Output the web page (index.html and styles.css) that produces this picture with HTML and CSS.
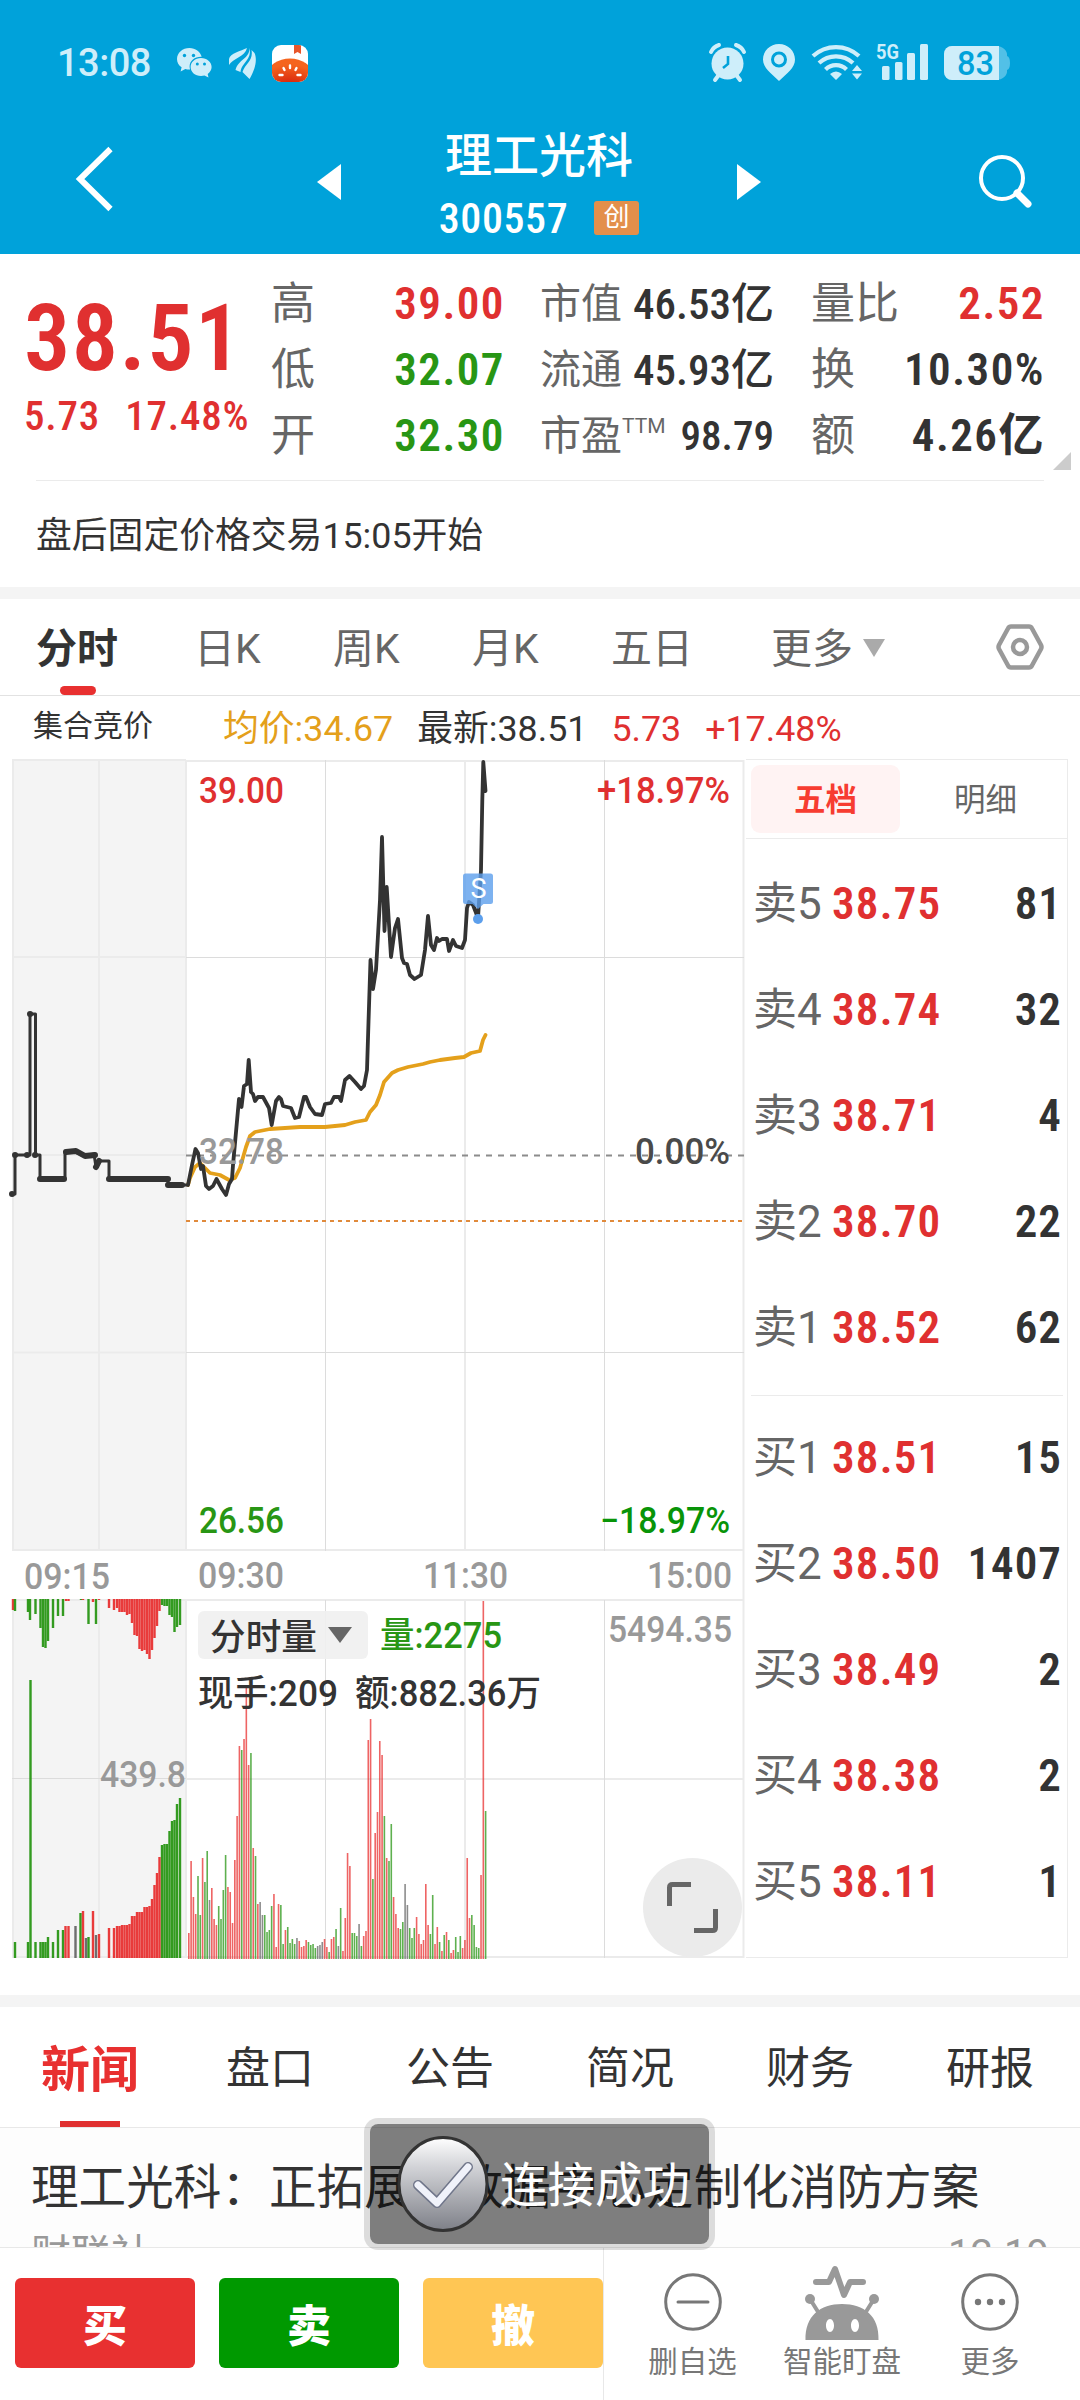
FILE: index.html
```html
<!DOCTYPE html>
<html lang="zh-CN">
<head>
    <meta charset="UTF-8">
    <meta name="viewport" content="width=device-width, initial-scale=1.0">
    <title>理工光科 300557</title>

    <link rel="stylesheet" href="styles.css">
</head>
<body>

    <header>
        <div class="status">
            <span class="time">13:08</span>
            <svg class="ico-wechat" width="36" height="30" viewBox="0 0 36 30" fill="#ceeefa">
                <path d="M12.500 0C5.600 0 0 4.800 0 11c0 3.400 1.700 6.300 4.600 8.300L3.600 23.500l4.700-2.600c1.400.4 2.700.6 4.200.6h.6a10 10 0 0 1-.5-3c0-5.700 5-9.800 11.300-9.800h.8C23.300 3.700 18.400 0 12.500 0z"/>
                <path d="M24 10c-5.900 0-10.400 4-10.400 9.100s4.500 9 10.400 9c1.200 0 2.400-.2 3.500-.5l4 2-.8-3.600c2.400-1.700 3.900-4.100 3.900-6.900C34.600 14 29.900 10 24 10z"/>
                <g fill="#00a2da"><circle cx="7.500" cy="7.500" r="1.700"/><circle cx="16.500" cy="7.500" r="1.700"/><circle cx="20.300" cy="16" r="1.500"/><circle cx="27.500" cy="16" r="1.500"/></g>
            </svg>
            <svg class="ico-wing" width="27" height="31" viewBox="0 0 27 31" fill="#ceeefa">
                <path d="M18 0C12 3 1 5 0 11v6C4 10 16 9 18 0z"/>
                <path d="M20.500 0c0 11-11 11-14 22l5 2C13 14 23 12 20.500 0z"/>
                <path d="M22.500 2c2 11-6 13-9 22l7 7c3-5 9-17 5-26z"/>
            </svg>
            <svg class="ico-tomato" width="36" height="37" viewBox="0 0 36 37">
                <defs>
                    <clipPath id="app"><rect width="36" height="37" rx="9"/></clipPath>
                    <radialGradient id="tomato" cx=".5" cy="1" r=".8"><stop offset="0" stop-color="#cf1208"/><stop offset="1" stop-color="#f5641e"/></radialGradient>
                </defs>
                <g clip-path="url(#app)">
                    <rect width="36" height="37" fill="#fff"/>
                    <path d="M22 0h7v9l-3.500-2L22 9z" fill="#e8562a"/>
                    <ellipse cx="18" cy="29" rx="22" ry="15.500" fill="url(#tomato)"/>
                </g>
                <g stroke="#fff" stroke-width="2.400" stroke-linecap="round"><path d="M18 20.500v2.500M11.500 23l1 2M24.500 23l-1 2M7.500 30h3M25.500 30h3"/></g>
            </svg>
            <svg class="status-right" width="304" height="42" viewBox="708 43 304 42" fill="#ceeefa">
                <circle cx="727.500" cy="64.500" r="16"/>
                <path d="M711 53a13 13 0 0 1 8-7M744 53a13 13 0 0 0-8-7M718 77l-3 4M737 77l3 4" fill="none" stroke="#ceeefa" stroke-width="4" stroke-linecap="round"/>
                <path d="M728 57v8l-5 4" fill="none" stroke="#00a2da" stroke-width="2.600"/>
                <path d="M779 45c-9 0-16 7-16 15.500C763 69 771 74 779 82c8-8 16-13 16-21.500C795 52 788 45 779 45z"/>
                <circle cx="779" cy="60.500" r="6.500" stroke="#00a2da" stroke-width="3"/>
                <g fill="none" stroke="#ceeefa" stroke-width="4.200"><path d="M813 57a34 34 0 0 1 46 0M819 64a25 25 0 0 1 34 0M825.500 70.500a15 15 0 0 1 21 0"/></g>
                <path d="M830 75q6-5 12 0l-6 6zM852 72l5-6 5 6zM852 74.500l5 6 5-6z"/>
                <rect x="882" y="67" width="7.500" height="14" rx="1.500"/><rect x="895" y="63" width="7.500" height="18" rx="1.500"/><rect x="907" y="54" width="8" height="27" rx="1.500"/><rect x="920" y="45" width="8" height="36" rx="1.500"/>
                <text x="876" y="60" class="net" textLength="23" lengthAdjust="spacingAndGlyphs">5G</text>
                <path d="M952 47h44a11 9 0 0 1 11 10q3 1 3 7t-3 7a11 9 0 0 1-11 10h-44a8 8 0 0 1-8-8V55a8 8 0 0 1 8-8z" opacity=".4"/>
                <path d="M952 47h47v34h-47a8 8 0 0 1-8-8V55a8 8 0 0 1 8-8z"/>
                <text x="957" y="75.500" class="battery" textLength="37" lengthAdjust="spacingAndGlyphs">83</text>
            </svg>
        </div>
        <div class="nav">
            <svg width="50" height="70" viewBox="70 144 50 70" fill="none" stroke="#fff" stroke-width="6"><path d="M110.500 149L80 179l30.500 30"/></svg>
            <svg class="prev" width="24" height="36" viewBox="0 0 24 36" fill="#fff"><path d="M24 0v36L0 18z"/></svg>
            <div class="stock">
                <h1>理工光科</h1>
                <div class="code"><span class="num">300557</span><span class="badge">创</span></div>
            </div>
            <svg class="next" width="24" height="36" viewBox="0 0 24 36" fill="#fff"><path d="M0 0v36l24-18z"/></svg>
            <svg class="search" width="54" height="54" viewBox="978 154 54 54" fill="none" stroke="#fff"><circle cx="1002" cy="178" r="21" stroke-width="4"/><path d="M1017 193l11 11" stroke-width="7" stroke-linecap="round"/></svg>
        </div>
    </header>

    <section class="quote">
        <div class="price red">
            <div class="last num">38.51</div>
            <div class="change num"><span>5.73</span><span>17.48%</span></div>
        </div>
        <dl class="col">
            <div><dt>高</dt><dd class="num red">39.00</dd></div>
            <div><dt>低</dt><dd class="num green">32.07</dd></div>
            <div><dt>开</dt><dd class="num green">32.30</dd></div>
        </dl>
        <dl class="col mid">
            <div><dt>市值</dt><dd class="num">46.53亿</dd></div>
            <div><dt>流通</dt><dd class="num">45.93亿</dd></div>
            <div><dt>市盈<sup>TTM</sup></dt><dd class="num small">98.79</dd></div>
        </dl>
        <dl class="col">
            <div><dt>量比</dt><dd class="num red">2.52</dd></div>
            <div><dt>换</dt><dd class="num">10.30%</dd></div>
            <div><dt>额</dt><dd class="num">4.26亿</dd></div>
        </dl>
        <i class="corner"></i>
    </section>
    <p class="notice">盘后固定价格交易15:05开始</p>

    <nav class="period">
        <a class="active">分时</a><a>日K</a><a>周K</a><a>月K</a><a>五日</a>
        <a>更多<i class="caret"></i></a>
        <svg width="48" height="46" viewBox="0 0 48 46" fill="none" stroke="#999"><path d="M15 2.500h18q2 0 3 2l9 16.500q1 2 0 4L36 41.500q-1 2-3 2H15q-2 0-3-2L3 25q-1-2 0-4l9-16.500q1-2 3-2z" stroke-width="4.500"/><circle cx="24" cy="23" r="7" stroke-width="4.500"/></svg>
    </nav>

    <div class="info">
        <span class="auction">集合竞价</span>
        <span class="avg">均价:34.67</span>
        <span>最新:38.51</span>
        <span class="red">5.73</span>
        <span class="red">+17.48%</span>
    </div>

    <main>
        <svg class="chart" width="746" height="1202" viewBox="0 758 746 1202">
            <rect x="12" y="759" width="174" height="792" fill="#f4f4f4"/>
            <rect x="12" y="1599" width="174" height="359" fill="#f4f4f4"/>

            <!-- grid -->
            <g stroke="#ebebeb" stroke-width="2" fill="none">
                <path d="M12 760H186M186 761H744M12 957H186M12 1155H186M12 1352.500H186M12 1550H744M12 1600H744M186 1779H744M12 1957H744"/>
                <path d="M13 760V1551M99 760V1551M186 760V1551M465 760V1551M743.500 760V1958M13 1600V1957M99 1600V1957M186 1600V1958M465 1600V1958"/>
            </g>
            <g stroke="#dcdcdc" stroke-width="1" fill="none">
                <path d="M186 957.500H744M186 1352.500H744M12 1778.500H186M325.500 760V1551M604.500 760V1551M325.500 1600V1958M604.500 1600V1958"/>
            </g>
            <path d="M186 1155.500H744" stroke="#8c8c8c" stroke-width="2" stroke-dasharray="6 6"/>
            <path d="M186 1221H744" stroke="#e08a3c" stroke-width="2" stroke-dasharray="4 4"/>

            <g id="volume"></g>

            <!-- average and price -->
            <path class="line" stroke="#e4a01b" d="M188 1185L190 1178 195 1167 200 1163 205 1168 210 1173 220 1175 229 1180 235 1178 240 1168 246 1147 250 1136 255 1132 270 1129 300 1127 325 1127 345 1125 355 1122 366 1120 370 1112 376 1105 380 1095 384 1082 392 1073 398 1070 408 1067 423 1064 430 1062 440 1060 455 1058 464 1057 471 1053 480 1051 483 1040 485.500 1035"/>
            <path class="line step" d="M12 1194H15V1155H30V1014H35.500V1155H40V1179H65V1152H75L80 1154 85 1156 94 1154 96 1167 100 1161H109V1179H168V1185H187"/>
            <path class="line dots" d="M40 1179H64M66 1152L76 1151 85 1156 95 1155M96 1167L99 1161M109 1179H168M168 1185H182M12 1194H12.100M15 1155H15.100M27 1155H27.100M30 1014H30.100M35 1155H35.100"/>
            <path class="line" stroke="#333" d="M188 1185L192 1165 195.500 1149 198 1153 201 1169 203 1166 206 1186 209 1189 213 1186 216.500 1179 222 1189 226 1195 229 1184 232 1179 233 1165 236 1132 239 1099 241.500 1107 244 1086 247 1084 248.700 1060 251 1092 253 1094 255 1101 258 1097 263 1097 269 1108 271.700 1125 276 1101 279 1097 281 1099 283 1106 291 1108 295 1118 299 1117 304 1097 306 1097 310 1107 315 1114 322 1115 325 1104 331 1103 334 1097 339 1097 341 1101 345 1080 349.500 1076 355 1082 361 1089 364 1086 367 1070 368.500 1022 370.500 960 373 989 376 970 380 900 382 837 384.500 931 386.700 887 391 957 395 928 398 919 402 958 404 963 407 964 410 975 414.500 979 421 975 425 950 428 916 431 945 434 950 437 938 439 941 442 939 447 939 449 951 453 940 456 946 462 948 465 940 467 908 469 902 473 905 478 918 481 870 482.300 800 483.300 762 485.500 791"/>

            <!-- sell marker -->
            <g fill="#5c9fec"><path opacity=".8" d="M465.500 873.500h25q2.500 0 2.500 2.500v25.500q0 2.500-2.500 2.500h-7l-5.500 5-5.500-5h-7q-2.500 0-2.500-2.500V876q0-2.500 2.500-2.500z"/><circle cx="478" cy="919" r="5"/></g>
            <text x="478.500" y="898" class="mark">S</text>

            <text class="t gray" x="199" y="1164" textLength="85" lengthAdjust="spacingAndGlyphs">32.78</text>
            <text class="t red" x="199" y="803" textLength="85" lengthAdjust="spacingAndGlyphs">39.00</text>
            <text class="t red" x="597" y="803" textLength="133" lengthAdjust="spacingAndGlyphs">+18.97%</text>
            <text class="t dark" x="635" y="1164" textLength="95" lengthAdjust="spacingAndGlyphs">0.00%</text>
            <text class="t green" x="199" y="1533" textLength="85" lengthAdjust="spacingAndGlyphs">26.56</text>
            <text class="t deep" x="600" y="1533" textLength="130" lengthAdjust="spacingAndGlyphs">−18.97%</text>

            <text class="t gray" x="24" y="1589" textLength="86" lengthAdjust="spacingAndGlyphs">09:15</text>
            <text class="t gray" x="198" y="1588" textLength="86" lengthAdjust="spacingAndGlyphs">09:30</text>
            <text class="t gray" x="423" y="1588" textLength="85" lengthAdjust="spacingAndGlyphs">11:30</text>
            <text class="t gray" x="647" y="1588" textLength="85" lengthAdjust="spacingAndGlyphs">15:00</text>
            <text class="t gray" x="608" y="1642" textLength="124" lengthAdjust="spacingAndGlyphs">5494.35</text>
            <text class="t gray" x="100" y="1787" textLength="86" lengthAdjust="spacingAndGlyphs">439.8</text>

            <rect x="198" y="1611" width="170" height="48" rx="6" fill="#f0f0f0" opacity=".9"/>
            <text class="t black" x="210" y="1650" textLength="107" lengthAdjust="spacingAndGlyphs">分时量</text>
            <path d="M328 1627h24l-12 16z" fill="#666"/>
            <text class="t green" x="380" y="1648" textLength="122" lengthAdjust="spacingAndGlyphs">量:2275</text>
            <text class="t black" x="198" y="1706" textLength="140" lengthAdjust="spacingAndGlyphs">现手:209</text>
            <text class="t black" x="355" y="1706" textLength="186" lengthAdjust="spacingAndGlyphs">额:882.36万</text>

            <circle cx="692.500" cy="1907.500" r="49.500" fill="#ebebeb"/>
            <path d="M669.500 1906v-18.500q0-3 3-3H691M694 1930.500h18.500q3 0 3-3V1909" fill="none" stroke="#666" stroke-width="5"/>
        </svg>

        <section class="book">
            <div class="book-tabs"><b>五档</b><span>明细</span></div>
            <ul>
                <li><span>卖5</span><em>38.75</em><strong>81</strong></li>
                <li><span>卖4</span><em>38.74</em><strong>32</strong></li>
                <li><span>卖3</span><em>38.71</em><strong>4</strong></li>
                <li><span>卖2</span><em>38.70</em><strong>22</strong></li>
                <li><span>卖1</span><em>38.52</em><strong>62</strong></li>
            </ul>
            <ul class="buy">
                <li><span>买1</span><em>38.51</em><strong>15</strong></li>
                <li><span>买2</span><em>38.50</em><strong>1407</strong></li>
                <li><span>买3</span><em>38.49</em><strong>2</strong></li>
                <li><span>买4</span><em>38.38</em><strong>2</strong></li>
                <li><span>买5</span><em>38.11</em><strong>1</strong></li>
            </ul>
        </section>
    </main>

    <nav class="topics">
        <a class="active">新闻</a><a>盘口</a><a>公告</a><a>简况</a><a>财务</a><a>研报</a>
    </nav>
    <article class="news">
        <h2>理工光科：正拓展AI数据中心定制化消防方案</h2>
        <div class="meta"><span>财联社</span><time>12-19</time></div>
    </article>

    <footer>
        <div class="trade">
            <button class="b-buy">买</button>
            <button class="b-sell">卖</button>
            <button class="b-cancel">撤</button>
        </div>
        <div class="tool t1">
            <svg width="80" height="80" viewBox="0 0 80 80" fill="none" stroke="#777" stroke-width="3"><circle cx="40" cy="40" r="27.300"/><path d="M25 40h30" stroke-linecap="round"/></svg>
            删自选
        </div>
        <div class="tool t2">
            <svg width="80" height="80" viewBox="0 0 80 80" fill="#999">
                <path d="M14 20h13l6-13 9 26 6-13h13" fill="none" stroke="#999" stroke-width="6" stroke-linecap="round" stroke-linejoin="round"/>
                <path d="M8 37l10 16M72 37L62 53" stroke="#999" stroke-width="4"/>
                <circle cx="8" cy="37" r="5"/><circle cx="72" cy="37" r="5"/>
                <path fill-rule="evenodd" d="M3.500 78C3 54 18 42 40 42s37.500 12 36.500 36zM28 57c-2.500 0-4 3-4 6.500s1.500 6.500 4 6.500 4-3 4-6.500-1.500-6.500-4-6.500zm25 0c-2.500 0-4 3-4 6.500s1.500 6.500 4 6.500 4-3 4-6.500-1.500-6.500-4-6.500z"/>
            </svg>
            智能盯盘
        </div>
        <div class="tool t3">
            <svg width="80" height="80" viewBox="0 0 80 80" fill="#777"><circle cx="40" cy="40" r="27.300" fill="none" stroke="#777" stroke-width="3"/><circle cx="28" cy="40" r="3.200"/><circle cx="40" cy="40" r="3.200"/><circle cx="52" cy="40" r="3.200"/></svg>
            更多
        </div>
    </footer>

    <div class="toast">
        <svg width="94" height="98" viewBox="0 0 94 98">
            <defs><linearGradient id="ball" x2="0" y2="1"><stop offset="0" stop-color="#fff"/><stop offset=".3" stop-color="#d4d5d9"/><stop offset="1" stop-color="#7e8088"/></linearGradient></defs>
            <ellipse cx="47" cy="49" rx="44" ry="46.500" fill="url(#ball)" stroke="#333" stroke-width="3"/>
            <g fill="none" stroke-linecap="round" stroke-linejoin="round"><path d="M22 50l19 18 31-36" stroke="#70768a" stroke-width="10"/><path d="M22 50l19 18 31-36" stroke="#f0f2fa" stroke-width="7"/></g>
        </svg>
        <span>连接成功</span>
    </div>

    <script src="script.js"></script>
</body>
</html>
```
FILE: styles.css
```css
* {
    box-sizing: border-box;
    margin: 0;
    padding: 0;
}

body {
    width: 1080px;
    height: 2400px;
    overflow: hidden;
    position: relative;
    background-color: #fff;
    color: #333;
    font-family: Roboto, "Noto Sans CJK SC", sans-serif;
}

svg {
    display: block;
    flex: none;
}

.num, .book em, .book strong {
    font-weight: 600;
    font-stretch: 87%;
    font-style: normal;
}

.red { color: #e03030; fill: #e03030; }
.green { color: #289614; fill: #289614; }
.deep { fill: #089408; }

header {
    height: 254px;
    background-color: #00a2da;
    color: #fff;
}

.status {
    display: flex;
    align-items: center;
    height: 126px;
    padding-left: 57px;
}

.time {
    width: 120px;
    font-size: 38px;
    font-weight: 500;
    letter-spacing: -0.5px;
    color: #ceeefa;
}

.ico-wing { margin-left: 16px; }
.ico-tomato { margin-left: 16px; }
.status-right { margin-left: 400px; }

.net {
    font-size: 21px;
    font-weight: 700;
}

.battery {
    font-size: 34px;
    font-weight: 500;
    fill: #00a2da;
}

.nav {
    display: flex;
    align-items: center;
    height: 106px;
    padding-left: 70px;
}

.prev { margin: 6px 0 0 197px; }
.next { margin-top: 6px; }
.search { margin: 4px 0 0 217px; }

.stock {
    width: 396px;
    height: 106px;
    text-align: center;
}

.stock h1 {
    font-size: 47px;
    font-weight: 500;
    line-height: 60px;
}

.code {
    display: flex;
    justify-content: center;
    align-items: center;
    height: 34px;
    margin-top: 15px;
    font-size: 42px;
    letter-spacing: 0.6px;
}

.code .num { font-weight: 500; }

.badge {
    width: 45px;
    height: 34px;
    margin-left: 26px;
    border-radius: 3px;
    background-color: #e38f4b;
    font-size: 26px;
    line-height: 33px;
}

.quote {
    position: relative;
    display: flex;
    height: 226px;
    padding-top: 17px;
}

.price {
    width: 271px;
    padding: 19px 0 0 24px;
}

.last {
    font-size: 92px;
    line-height: 98px;
    letter-spacing: 1.5px;
}

.change {
    display: flex;
    gap: 25px;
    margin-top: 0;
    font-size: 41px;
    font-weight: 500;
    line-height: 56px;
    letter-spacing: 0.8px;
}

.col {
    width: 233px;
}

.col div {
    display: flex;
    justify-content: space-between;
    height: 66px;
    font-size: 45px;
    line-height: 66px;
}

.col dt {
    color: #666;
    font-size: 44px;
}

.col dd {
    margin-right: -1px;
    letter-spacing: 1.5px;
}

.mid {
    width: 234px;
    margin: 0 37px 0 36px;
}

.mid div { font-size: 43px; }
.mid dt { font-size: 41px; }

.mid dd {
    margin-right: 0;
    font-weight: 500;
    letter-spacing: 0;
}

.mid .small { font-size: 41px; }

.col sup {
    font-size: 21px;
    line-height: 0;
    vertical-align: 17px;
}

.corner {
    position: absolute;
    right: 9px;
    bottom: 10px;
    border-left: 18px solid transparent;
    border-bottom: 18px solid #ccc;
}

.notice {
    height: 107px;
    margin: 0 36px;
    border-top: 1px solid #ebebeb;
    font-size: 35.8px;
    line-height: 110px;
}

.period {
    display: flex;
    align-items: center;
    height: 109px;
    padding-left: 36px;
    border-top: 12px solid #f4f4f4;
    border-bottom: 1px solid #e2e2e2;
    font-size: 41px;
    color: #666;
}

.period a {
    position: relative;
    width: 139px;
    height: 96px;
    line-height: 100px;
    white-space: nowrap;
}

.period a:first-child { width: 158px; }
.period a:nth-child(5) { width: 160px; }
.period a:nth-child(6) { width: 225px; }

.period .active {
    color: #333;
    font-weight: 700;
}

.period .active::after {
    content: "";
    position: absolute;
    left: 24px;
    bottom: 0;
    width: 36px;
    height: 9px;
    border-radius: 5px;
    background-color: #e83030;
}

.caret {
    display: inline-block;
    margin-left: 10px;
    border: 11px solid transparent;
    border-top: 18px solid #aaa;
    border-bottom: 0;
    vertical-align: 6px;
}

.info {
    display: flex;
    height: 62px;
    padding-left: 33px;
    font-size: 35.8px;
    line-height: 66px;
}

.auction {
    width: 190px;
    font-size: 30px;
    line-height: 59px;
}

.avg { color: #e4a01b; }
.info span + span + span { margin-left: 24px; }

main {
    display: flex;
    height: 1202px;
}

.line {
    fill: none;
    stroke-width: 3.8;
    stroke-linejoin: round;
    stroke-linecap: round;
}

.step { stroke: #333; stroke-width: 3; }
.dots { stroke: #333; stroke-width: 6; }

.t {
    font-size: 36px;
    font-weight: 500;
}

.gray { fill: #999; }
.dark { fill: #4a4a4a; }
.black { fill: #333; }

.mark {
    font-size: 27px;
    text-anchor: middle;
    fill: #fff;
}

.book {
    width: 322px;
    height: 1199px;
    margin-top: 1px;
    border: 1px solid #ebebeb;
    border-left: 0;
}

.book-tabs {
    display: flex;
    height: 79px;
    padding: 5px 0 0 5px;
    border-bottom: 1px solid #ebebeb;
    font-size: 31.5px;
    line-height: 72px;
    text-align: center;
}

.book-tabs b {
    flex: none;
    width: 149px;
    height: 68px;
    border-radius: 9px;
    background-color: #fff3f3;
    color: #f73c31;
}

.book-tabs span {
    flex: none;
    width: 171px;
    color: #666;
}

.book ul {
    height: 557px;
    margin: 0 4px 0 5px;
    padding-top: 12px;
    border-bottom: 1px solid #ebebeb;
    list-style: none;
}

.book .buy {
    padding-top: 9px;
    border: 0;
}

.book li {
    display: flex;
    height: 106.1px;
    padding-left: 2px;
    font-size: 45px;
    line-height: 106px;
}

.book li span {
    width: 79px;
    font-size: 44px;
    color: #666;
}

.book em {
    color: #e03030;
    letter-spacing: 1.2px;
}

.book strong {
    margin-left: auto;
    margin-right: 1px;
    letter-spacing: 1px;
}

.topics {
    display: flex;
    height: 133px;
    margin-top: 35px;
    border-top: 12px solid #f4f4f4;
    border-bottom: 1px solid #e8e8e8;
    font-size: 44px;
    line-height: 125px;
    text-align: center;
}

.topics a {
    position: relative;
    width: 180px;
}

.topics .active {
    color: #e83030;
    font-size: 49px;
    font-weight: 700;
    line-height: 127px;
}

.topics .active::after {
    content: "";
    position: absolute;
    left: 60px;
    bottom: 0;
    width: 60px;
    height: 6px;
    background-color: #e03030;
}

.news {
    height: 119px;
    padding: 24px 31px 0;
    overflow: hidden;
    background-color: #fdfdfd;
}

.news h2 {
    font-size: 47.6px;
    font-weight: 400;
    line-height: 72px;
    white-space: nowrap;
}

.meta {
    display: flex;
    justify-content: space-between;
    margin-top: 1px;
    font-size: 40px;
    line-height: 60px;
    color: #999;
}

footer {
    display: flex;
    height: 153px;
    border-top: 1px solid #e8e8e8;
    background-color: #fff;
}

.trade {
    display: flex;
    gap: 24px;
    width: 604px;
    padding: 30px 0 0 15px;
    border-right: 1px solid #e8e8e8;
}

.trade button {
    width: 180px;
    height: 90px;
    border: 0;
    border-radius: 6px;
    color: #fff;
    font-family: inherit;
    font-size: 44px;
    font-weight: 900;
}

.b-buy { background-color: #e83030; }
.b-sell { background-color: #009900; }
.b-cancel { background-color: #ffc654; }

.tool {
    display: flex;
    flex-direction: column;
    align-items: center;
    padding-top: 14px;
    font-size: 29.5px;
    line-height: 41px;
    color: #777;
}

.t1 { width: 177px; }
.t2 { width: 122px; white-space: nowrap; }
.t3 { width: 174px; }

.toast {
    position: absolute;
    left: 370px;
    top: 2124px;
    display: flex;
    align-items: center;
    width: 339px;
    height: 120px;
    padding-left: 26px;
    border-radius: 8px;
    box-shadow: 0 0 0 6px rgba(0, 0, 0, 0.13);
    background-color: rgba(0, 0, 0, 0.5);
    color: #fff;
    font-size: 47.5px;
    line-height: 60px;
    white-space: nowrap;
}

.toast span { margin: 3px 0 0 10px; }
```
FILE: script.js
```js
var COLORS = { r: '#e83030', g: '#289614', k: '#666' };
var BASE = 1958;
var g = document.getElementById('volume');

function bar(x, y, w, h, c, opacity) {
    var el = document.createElementNS('http://www.w3.org/2000/svg', 'rect');
    el.setAttribute('x', x - w / 2);
    el.setAttribute('y', y);
    el.setAttribute('width', w);
    el.setAttribute('height', h);
    el.setAttribute('fill', COLORS[c]);
    el.setAttribute('opacity', opacity);
    g.appendChild(el);
}

// call auction, unmatched volume (hangs from the top): x, depth, colour
var unmatched = '13 11 r,15 12 g,28 13 g,30 21 g,35.5 15 g,40.5 29 g,43 48 g,45.5 49 g,48 42 g,53 29 g,58 17 g,63 17 g,66 2 r,68.5 2 r,81 1 g,83 1 r,88.5 25 g,93 3 r,96 25 g,99 1 r,109 9 r,114 11 r,117 9 r,119.5 13 r,122 13 r,124.5 13 r,127 16 r,129.5 15 r,132 24 r,134.5 36 r,137 37 r,139.5 50 r,142 52 r,144.5 51 r,147 55 r,149.5 60 r,152 51 r,154.5 39 r,157 27 r,159.5 12 r,162 6 g,164.5 7 g,167 7 g,169.5 16 g,172 18 g,174.5 33 g,177 28 g,180 26 g';

// call auction, matched volume (grows from the base)
var matched = '15 16 g,28 16 g,30.5 278 g,35.5 16 g,40.5 16 g,43 16 g,45.5 16 g,48 21 g,53 16 g,58 28 g,63 28 g,65.5 32 r,68.5 32 r,75.5 32 k,80.5 45 g,83 47 r,86 20 k,88.5 21 g,93 47 r,96 23 k,99 24 r,109 30 r,114 30 r,117 32 r,119.5 32 r,122 33 r,124.5 33 r,127 33 r,129.5 34 r,132 42 r,134.5 42 r,137 46 r,139.5 46 r,142 46 r,144.5 51 r,147 51 r,149.5 52 r,152 59 r,154.5 73 r,157 85 r,159.5 101 r,162 113 g,164.5 114 g,167 114 g,169.5 127 g,172 137 g,174.5 138 g,177 154 g,180 160 g';

// one bar per minute from 09:30
var minutes = '26r 98r 62r 45r 83g 44g 101r 77g 108g 59k 71r 40r 34r 53g 40g 69g 104g 72r 67r 36r 99r 143r 213r 209g 220r 273r 194r 206g 111r 103g 55r 57k 44k 44g 27g 29g 53g 65r 12r 55r 54g 15g 29r 32g 16g 20g 15g 21k 18r 12r 13r 19r 17g 14g 15g 11g 13k 14k 17k 20r 12r 7g 20r 22r 30g 13k 51g 8r 41r 106r 93r 26g 26g 23g 35k 13g 23r 28r 219r 240r 80g 126r 147r 218r 204r 143g 101r 98g 135g 62r 45r 31r 30g 37g 75k 54k 31g 21g 31g 42r 25r 15r 19r 75r 34r 25g 64g 15r 32r 17g 8r 24g 27r 19g 6r 9r 22g 7g 23g 11r 19r 101r 41r 44g 34g 12g 11g 84r 358r 148g';

unmatched.split(',').forEach(function (s) {
    var v = s.split(' ');
    bar(+v[0], 1599, 2.4, +v[1], v[2], 0.95);
});

matched.split(',').forEach(function (s) {
    var v = s.split(' ');
    bar(+v[0], BASE - v[1], 2.4, +v[1], v[2], 0.95);
});

minutes.split(' ').forEach(function (s, i) {
    var h = parseInt(s, 10);
    bar(188.8 + i * 2.301, BASE + 1 - h, 1.6, h, s.slice(-1), 0.75);
});
```
